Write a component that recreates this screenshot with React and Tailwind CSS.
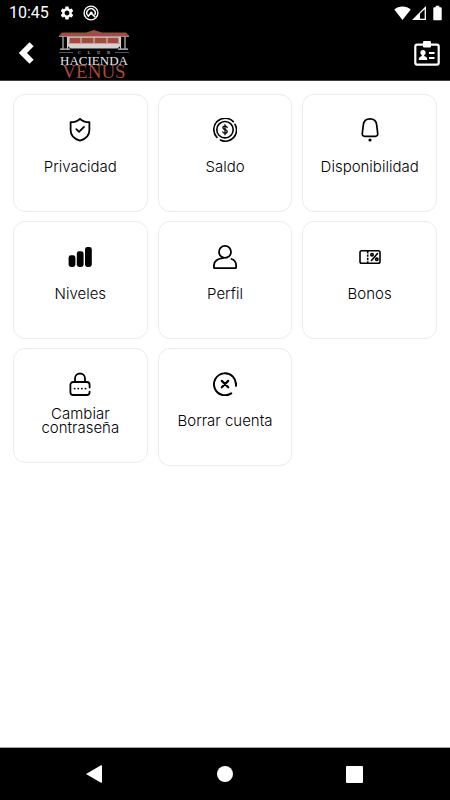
import { MdSettings } from 'react-icons/md'

const ShieldIcon = () => (
  <svg className="h-6 w-6" viewBox="0 0 24 24" fill="none" stroke="currentColor" strokeWidth="1.8" strokeLinecap="round" strokeLinejoin="round">
    <path d="M12 .8C10 3 6.500 4.200 2.600 4.200V12c0 5.500 4.200 9.200 9.400 10.700 5.200-1.500 9.400-5.200 9.400-10.700V4.200C17.500 4.200 14 3 12 .8z" />
    <path d="M8.300 11.200l2.700 2.700 5-5" />
  </svg>
)

const CoinIcon = () => (
  <svg className="h-6 w-6" viewBox="0 0 24 24" fill="none" stroke="currentColor" strokeWidth="1.6" strokeLinecap="round" strokeLinejoin="round">
    <path d="M4 19.500A11.200 11.200 0 0 1 20.300 3.600" />
    <path d="M22 6.300A11.200 11.200 0 0 1 7.300 22" />
    <circle cx="12" cy="11.700" r="8.200" />
    <path d="M12 6.700v10M14.200 9.500c-.2-.9-1-1.400-2.200-1.400s-2.100.6-2.100 1.700c0 2.400 4.300 1.300 4.300 3.800 0 1.100-.9 1.700-2.200 1.700s-2.100-.6-2.200-1.500" strokeWidth="1.300" />
  </svg>
)

const BellIcon = () => (
  <svg className="h-6 w-6" viewBox="0 0 24 24" fill="none" stroke="currentColor" strokeWidth="1.7" strokeLinejoin="round">
    <path d="M12 .9C8 .9 5.700 3.200 5.300 7l-1 8.300c-.2 2 .6 3 2.400 3h10.600c1.800 0 2.600-1 2.400-3l-1-8.300C18.300 3.200 16 .9 12 .9z" />
    <circle cx="12" cy="22" r="1.600" fill="currentColor" stroke="none" />
  </svg>
)

const LevelsIcon = () => (
  <svg className="h-6 w-6" viewBox="0 0 24 24" fill="currentColor">
    <rect x="0.600" y="10.300" width="6.800" height="11.700" rx="2.400" />
    <rect x="8.800" y="6.300" width="6.800" height="15.700" rx="2.400" />
    <rect x="17" y="2" width="6.800" height="20" rx="2.400" />
  </svg>
)

const UserIcon = () => (
  <svg className="h-6 w-6" viewBox="0 0 24 24" fill="none" stroke="currentColor" strokeWidth="1.8" strokeLinecap="round" strokeLinejoin="round">
    <circle cx="12" cy="6.900" r="6" />
    <path d="M10 13.200c-5 .2-9.100 3-9.100 7v2c0 .6.400 1 1 1h20.200c.6 0 1-.4 1-1v-2c0-3-1.700-5.200-4.600-6.200" />
  </svg>
)

const CouponIcon = () => (
  <svg className="h-6 w-6" viewBox="0 0 24 24" fill="none" stroke="currentColor" strokeWidth="1.6">
    <rect x="2" y="5.700" width="20" height="12.600" rx="1.800" />
    <path d="M9.700 6v12" strokeDasharray="2.400 1" />
    <path d="M19.500 8.500l-6 7" strokeLinecap="round" />
    <circle cx="14" cy="9.700" r="1.200" />
    <circle cx="18.800" cy="14.300" r="1.200" />
  </svg>
)

const LockIcon = () => (
  <svg className="h-6 w-6" viewBox="0 0 24 24" fill="none" stroke="currentColor" strokeWidth="1.800" strokeLinecap="round" strokeLinejoin="round">
    <path d="M7 10V6.500a5 5 0 0 1 10 0V10" />
    <path d="M21.600 15.500v-2.700c0-1.700-1.100-2.800-2.800-2.800H5.200c-1.700 0-2.800 1.100-2.800 2.800v7.400c0 1.700 1.100 2.800 2.800 2.800h13.600c1.700 0 2.800-1.100 2.800-2.800v-.6" />
    <path d="M6.600 16.600h.1M10.200 16.600h.1M13.800 16.600h.1M17.400 16.600h.1" />
  </svg>
)

const DeleteIcon = () => (
  <svg className="h-6 w-6" viewBox="0 0 24 24" fill="none" stroke="currentColor" strokeWidth="2" strokeLinecap="round">
    <path d="M22.900 13.800A11 11 0 1 0 18.200 21.400" />
    <path d="M8.800 8.900l6.400 6.400M15.200 8.900l-6.400 6.400" strokeWidth="2.200" />
  </svg>
)

const BadgeIcon = () => (
  <svg className="h-[26px] w-[26px]" viewBox="0 0 26 26" fill="none" stroke="white" strokeWidth="2.200">
    <rect x="1.300" y="4.600" width="23.400" height="20" rx="1.800" />
    <rect x="9" y="1" width="8" height="6.500" rx="1.200" fill="white" stroke="none" />
    <circle cx="9" cy="12.500" r="2.600" fill="white" stroke="none" />
    <path d="M4.800 20v-1.300c0-1.700 2-2.200 3-2.700v-2h2.400v2c1 .5 3 1 3 2.700V20z" fill="white" stroke="none" />
    <path d="M15 13h5.500M15 18h5.500" />
  </svg>
)

const items = [
  { label: 'Privacidad', Icon: ShieldIcon },
  { label: 'Saldo', Icon: CoinIcon },
  { label: 'Disponibilidad', Icon: BellIcon },
  { label: 'Niveles', Icon: LevelsIcon },
  { label: 'Perfil', Icon: UserIcon },
  { label: 'Bonos', Icon: CouponIcon },
  { label: 'Cambiar contraseña', Icon: LockIcon, short: true },
  { label: 'Borrar cuenta', Icon: DeleteIcon },
]

const StatusBar = () => (
  <div className="flex h-[26px] items-center justify-between pl-[9px] pr-2">
    <div className="flex items-center">
      <span className="font-['Roboto',sans-serif] text-base leading-6">10:45</span>
      <MdSettings className="ml-[10px] h-4 w-4" />
      <svg className="ml-2 h-4 w-4" viewBox="0 0 16 16" fill="none" stroke="white" strokeWidth="1.400">
        <circle cx="8" cy="8" r="6.900" />
        <path d="M4.800 10.600A4.200 4.200 0 1 1 11.600 10.100" />
        <path d="M4.800 11.600L8 8.300M8 8l4.300 4.300" strokeWidth="1.600" />
        <circle cx="8.200" cy="8" r="1.500" fill="white" stroke="none" />
      </svg>
    </div>
    <div className="flex items-center">
      <svg className="h-4 w-[17px]" viewBox="0 0 17 16" fill="white">
        <path d="M8.500 15L.3 4.400C2.500 2.500 5.300 1.400 8.500 1.400s6 1.100 8.200 3z" />
      </svg>
      <svg className="h-4 w-4" viewBox="0 0 16 16">
        <path d="M14.300 2.600v11.700H2.600z" fill="none" stroke="white" strokeWidth="1.300" />
        <path d="M2.600 14.300L9 8v6.300z" fill="white" />
      </svg>
      <svg className="ml-[6px] h-4 w-[9px]" viewBox="0 0 9 16" fill="white">
        <path d="M2.700.8h3.600v1.500h1.500c.5 0 .9.400.9.900v11.200c0 .5-.4.900-.9.900H1.200c-.5 0-.9-.4-.9-.9V3.200c0-.5.4-.9.900-.9h1.500z" />
      </svg>
    </div>
  </div>
)

const Logo = () => (
  <div className="flex w-[70px] flex-col items-center pt-[2px] font-['Liberation_Serif',serif]">
    <svg className="h-5 w-[70px]" viewBox="0 0 70 20">
      <path d="M0 5.800L3 2.600h24L35 0l8 2.600h24l3 3.200z" fill="#a8493e" />
      <path d="M0 5.800h70v1H0z" fill="#c9b8b4" />
      <path d="M9 6.800h52v6.500H9z" fill="#d8c8c5" />
      <path d="M10.500 7.800h11v5.500h-11zM22.500 7.800h12v5.500h-12zM35.500 7.800h12v5.500h-12zM48.500 7.800h11v5.500h-11z" fill="#a8493e" />
      <path d="M9 13.300h52v3l-2.500 2.200h-47L9 16.300z" fill="#d2d2d2" />
      <path d="M1 18.600h10v1.100H1zM59 18.600h10v1.100H59z" fill="#cfcfcf" />
      <path d="M4 6.800v12M8.500 6.800v12M61.500 6.800v12M66 6.800v12" stroke="#cfcfcf" strokeWidth="1.100" />
    </svg>
    <div className="flex h-[6px] w-full items-center gap-[5px] text-[4px] leading-[6px] text-gray-200">
      <span className="h-px w-[14px] bg-gray-600" />
      <span className="flex flex-1 justify-between">
        <span>C</span>
        <span>L</span>
        <span>U</span>
        <span>B</span>
      </span>
      <span className="h-px w-[14px] bg-gray-600" />
    </div>
    <span className="text-[13px] leading-[9px] text-gray-200">HACIENDA</span>
    <span className="text-[19px] leading-[14px] text-[#a8493e]">VENUS</span>
  </div>
)

const Header = () => (
  <header className="border-b border-neutral-700 bg-black text-white">
    <StatusBar />
    <div className="flex h-[54px] items-center pl-[18px] pr-[10px]">
      <button type="button" aria-label="Volver">
        <svg className="h-6 w-4" viewBox="0 0 16 24" fill="white">
          <path d="M.8 12L11.500 1.200l4.200 4.100L9 12l6.700 6.700-4.200 4.100z" />
        </svg>
      </button>
      <div className="ml-[25px]">
        <Logo />
      </div>
      <button type="button" aria-label="Carnet" className="ml-auto">
        <BadgeIcon />
      </button>
    </div>
  </header>
)

const NavBar = () => (
  <nav className="grid h-[53px] grid-cols-[1fr_68px_1fr] items-center border-t border-neutral-400 bg-black">
    <button type="button" aria-label="Atrás" className="justify-self-center">
      <svg className="h-[18px] w-5" viewBox="0 0 20 18" fill="white">
        <path d="M0 9L15 .3c.6-.3 1 0 1 .6v16.200c0 .6-.4.900-1 .6z" />
      </svg>
    </button>
    <button type="button" aria-label="Inicio" className="h-4 w-4 justify-self-center rounded-full bg-white" />
    <button type="button" aria-label="Recientes" className="h-[17px] w-[17px] justify-self-center rounded-[1px] bg-white" />
  </nav>
)

const App = () => {
  return (
    <div className="flex min-h-screen flex-col bg-white">
      <Header />

      <main className="grid flex-1 grid-cols-3 content-start items-start gap-x-[10px] gap-y-[9px] px-[13px] pt-[13px]">
        {items.map(({ label, Icon, short }) => (
          <button
            key={label}
            type="button"
            className={`flex flex-col items-center rounded-xl border border-[#ececec] px-2 pt-[23px] text-black ${short ? 'pb-[27px]' : 'pb-[30px]'}`}
          >
            <Icon />
            <span className="mt-[11px] flex h-7 items-center text-center font-['Inter',sans-serif] text-[15px] font-light leading-[14px]">
              {label}
            </span>
          </button>
        ))}
      </main>

      <NavBar />
    </div>
  )
}

export default App
